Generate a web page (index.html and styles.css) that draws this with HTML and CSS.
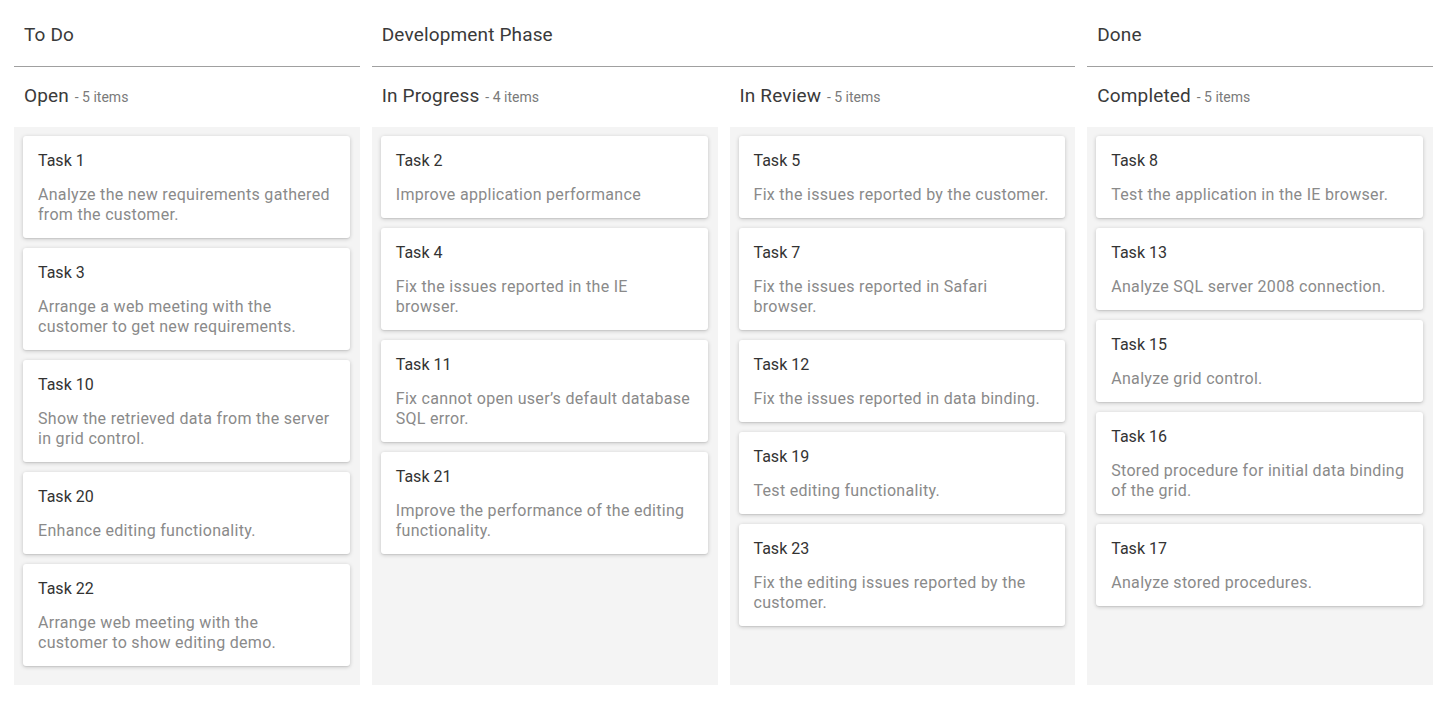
FILE: index.html
```html
<!DOCTYPE html>
<html>
<head>
<meta charset="utf-8">
<link rel="stylesheet" href="styles.css">
</head>
<body>
<div class="board">
  <div class="hcell span1">To Do</div>
  <div class="hcell span2">Development Phase</div>
  <div class="hcell span1">Done</div>

  <div class="scell">Open <span class="count">- 5 items</span></div>
  <div class="scell">In Progress <span class="count">- 4 items</span></div>
  <div class="scell">In Review <span class="count">- 5 items</span></div>
  <div class="scell">Completed <span class="count">- 5 items</span></div>

  <div class="lane">
    <div class="card"><div class="title">Task 1</div><div class="text">Analyze the new requirements gathered from the customer.</div></div>
    <div class="card"><div class="title">Task 3</div><div class="text">Arrange a web meeting with the customer to get new requirements.</div></div>
    <div class="card"><div class="title">Task 10</div><div class="text">Show the retrieved data from the server in grid control.</div></div>
    <div class="card"><div class="title">Task 20</div><div class="text">Enhance editing functionality.</div></div>
    <div class="card"><div class="title">Task 22</div><div class="text">Arrange web meeting with the<br>customer to show editing demo.</div></div>
  </div>
  <div class="lane">
    <div class="card"><div class="title">Task 2</div><div class="text">Improve application performance</div></div>
    <div class="card"><div class="title">Task 4</div><div class="text">Fix the issues reported in the IE browser.</div></div>
    <div class="card"><div class="title">Task 11</div><div class="text">Fix cannot open user’s default database SQL error.</div></div>
    <div class="card"><div class="title">Task 21</div><div class="text">Improve the performance of the editing functionality.</div></div>
  </div>
  <div class="lane">
    <div class="card"><div class="title">Task 5</div><div class="text">Fix the issues reported by the customer.</div></div>
    <div class="card"><div class="title">Task 7</div><div class="text">Fix the issues reported in Safari browser.</div></div>
    <div class="card"><div class="title">Task 12</div><div class="text">Fix the issues reported in data binding.</div></div>
    <div class="card"><div class="title">Task 19</div><div class="text">Test editing functionality.</div></div>
    <div class="card"><div class="title">Task 23</div><div class="text">Fix the editing issues reported by the customer.</div></div>
  </div>
  <div class="lane">
    <div class="card"><div class="title">Task 8</div><div class="text">Test the application in the IE browser.</div></div>
    <div class="card"><div class="title">Task 13</div><div class="text">Analyze SQL server 2008 connection.</div></div>
    <div class="card"><div class="title">Task 15</div><div class="text">Analyze grid control.</div></div>
    <div class="card"><div class="title">Task 16</div><div class="text">Stored procedure for initial data binding of the grid.</div></div>
    <div class="card"><div class="title">Task 17</div><div class="text">Analyze stored procedures.</div></div>
  </div>
</div>
</body>
</html>
```
FILE: styles.css
```css
html, body {
  margin: 0;
  padding: 0;
  background: #fff;
  font-family: Roboto, "Liberation Sans", sans-serif;
}
.board {
  display: grid;
  grid-template-columns: repeat(4, 1fr);
  grid-template-rows: 67px 60px 558px;
  column-gap: 12px;
  padding: 0 23px 0 14px;
}
.hcell {
  border-bottom: 1px solid #a0a0a0;
  padding: 23px 10px 19px 10px;
  font-size: 19px;
  line-height: 24px;
  letter-spacing: 0.15px;
  color: #3a3a3a;
}
.span1 { grid-column: span 1; }
.span2 { grid-column: span 2; }
.scell {
  padding: 17px 10px 19px 10px;
  font-size: 19px;
  line-height: 24px;
  letter-spacing: 0.15px;
  color: #3a3a3a;
}
.count {
  font-size: 14px;
  letter-spacing: 0;
  color: #7a7a7a;
  margin-left: 1px;
}
.lane {
  background: #f4f4f4;
  padding: 9px 10px 9px 9px;
  display: flex;
  flex-direction: column;
  gap: 10px;
}
.card {
  background: #fff;
  border-radius: 3px;
  box-shadow: 0 1px 4px rgba(0,0,0,0.2), 0 1px 1px rgba(0,0,0,0.06);
  padding: 13px 14px 13px 15px;
}
.title {
  font-size: 16px;
  line-height: 24px;
  color: #333;
}
.text {
  margin-top: 12px;
  font-size: 16px;
  line-height: 20px;
  letter-spacing: 0.3px;
  color: #8a8a8a;
}
```
